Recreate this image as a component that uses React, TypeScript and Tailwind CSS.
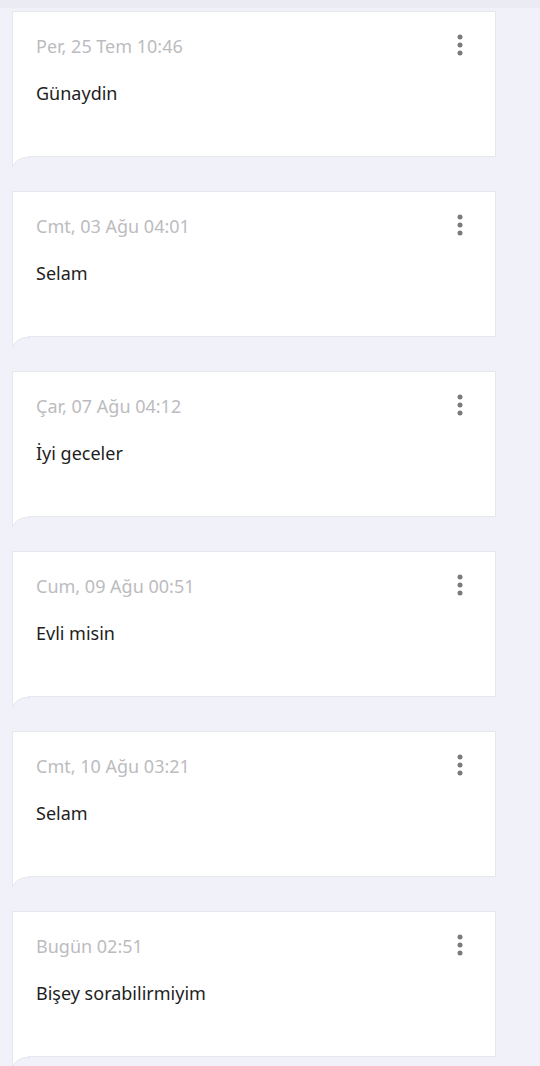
import React from "react";

const notes = [
  { date: "Per, 25 Tem 10:46", text: "Günaydin" },
  { date: "Cmt, 03 Ağu 04:01", text: "Selam" },
  { date: "Çar, 07 Ağu 04:12", text: "İyi geceler" },
  { date: "Cum, 09 Ağu 00:51", text: "Evli misin" },
  { date: "Cmt, 10 Ağu 03:21", text: "Selam" },
  { date: "Bugün 02:51", text: "Bişey sorabilirmiyim" },
];

function MoreDots() {
  return (
    <svg width="10" height="26" viewBox="0 0 10 26" className="text-[#7a7a7a]">
      <circle cx="5" cy="5" r="2.5" fill="currentColor" />
      <circle cx="5" cy="13" r="2.5" fill="currentColor" />
      <circle cx="5" cy="21" r="2.5" fill="currentColor" />
    </svg>
  );
}

function NoteCard({ date, text }: { date: string; text: string }) {
  return (
    <div className="relative ml-[12px] h-[146px] w-[484px] border border-[#e5e6ee] bg-white">
      <div className="flex h-[26px] items-start justify-between pl-[23px] pr-[30px] mt-[21px]">
        <span className="text-[18px] leading-[26px] text-[#bcbcc0]">{date}</span>
        <div className="-mt-[1px]">
          <MoreDots />
        </div>
      </div>
      <p className="pl-[23px] pt-[21px] text-[18px] leading-[26px] text-[#1e1e1e]">{text}</p>
      <svg
        width="18"
        height="13"
        viewBox="0 0 18 13"
        className="absolute left-[-1px] top-[144px]"
      >
        <path d="M0 0 L16 0 L16 1 Q6 1 1 11 L0 11 Z" fill="#ffffff" />
        <path d="M0.5 0 L0.5 11" stroke="#e5e6ee" strokeWidth="1" fill="none" />
        <path d="M0.5 11 Q5 2 14 1.5 L18 1.5" stroke="#e5e6ee" strokeWidth="1" fill="none" />
      </svg>
    </div>
  );
}

export default function App() {
  return (
    <div
      className="min-h-[1066px] w-[540px] overflow-hidden bg-[#f1f2f9]"
      style={{ fontFamily: '"Noto Sans", Roboto, sans-serif' }}
    >
      <div className="h-[8px] bg-[#ebecf3]" />
      <div className="flex flex-col gap-[34px] pt-[3px]">
        {notes.map((n, i) => (
          <NoteCard key={i} date={n.date} text={n.text} />
        ))}
      </div>
    </div>
  );
}
